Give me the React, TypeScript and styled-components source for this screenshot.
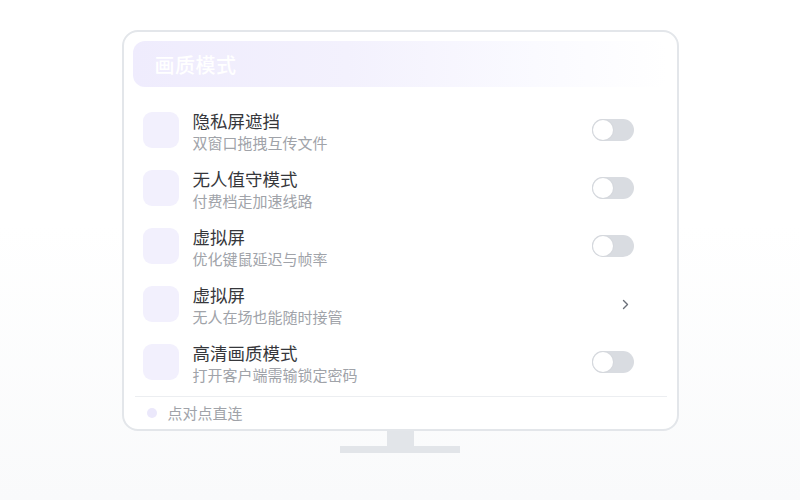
import React from "react";
import styled, { createGlobalStyle } from "styled-components";

const Global = createGlobalStyle`
  html, body { margin: 0; padding: 0; }
  body {
    width: 800px;
    height: 500px;
    overflow: hidden;
    font-family: "Noto Sans CJK SC", "Noto Sans", sans-serif;
    background: linear-gradient(180deg, #ffffff 0%, #ffffff 45%, #f9fafb 100%);
  }
`;

const Page = styled.div`
  width: 800px;
  height: 500px;
  display: flex;
  flex-direction: column;
  align-items: center;
  padding-top: 30px;
  box-sizing: border-box;
`;

const Monitor = styled.div`
  width: 557px;
  height: 401px;
  box-sizing: border-box;
  border: 2px solid #e3e6ea;
  border-radius: 16px;
  background: rgba(255, 255, 255, 0.9);
  padding: 9px 9px 0 9px;
  display: flex;
  flex-direction: column;
`;

const Neck = styled.div`
  width: 27px;
  height: 15px;
  background: #e2e5e9;
`;

const Base = styled.div`
  width: 120px;
  height: 7px;
  background: #e2e5e9;
`;

const Header = styled.div`
  height: 46px;
  border-radius: 12px;
  background: linear-gradient(90deg, #efecfd 0%, #f3f1fd 40%, #fafaff 75%, rgba(255,255,255,0) 100%);
  display: flex;
  align-items: center;
  padding-left: 22px;
`;

const HeaderTitle = styled.span`
  color: #ffffff;
  font-size: 20px;
  font-weight: 500;
  letter-spacing: 0.5px;
`;

const List = styled.div`
  margin-top: 14px;
  display: flex;
  flex-direction: column;
`;

const Row = styled.div`
  height: 58px;
  display: flex;
  align-items: center;
  padding: 0 34px 0 10px;
`;

const IconBox = styled.div`
  width: 36px;
  height: 36px;
  border-radius: 9px;
  background: #f2f0fd;
  flex-shrink: 0;
`;

const TextBlock = styled.div`
  flex: 1;
  margin-left: 14px;
  margin-top: 1px;
  display: flex;
  flex-direction: column;
`;

const Title = styled.div`
  font-size: 17.5px;
  line-height: 23px;
  color: #36373b;
`;

const Sub = styled.div`
  font-size: 15px;
  line-height: 21px;
  color: #a0a3a9;
`;

const Track = styled.div`
  width: 42px;
  height: 22px;
  border-radius: 11px;
  background: #d9dce1;
  position: relative;
`;

const Knob = styled.div`
  position: absolute;
  left: 1px;
  top: 1px;
  width: 20px;
  height: 20px;
  border-radius: 50%;
  background: #ffffff;
  box-shadow: 0 0 0 1px #d5d8dd;
`;

const Chevron = styled.div`
  width: 42px;
  display: flex;
  justify-content: flex-end;
  padding-right: 5px;
  box-sizing: border-box;
`;

const Footer = styled.div`
  margin-top: 5px;
  border-top: 1px solid #eceef1;
  margin-left: 2px;
  margin-right: 1px;
  height: 32px;
  display: flex;
  align-items: center;
  padding-left: 12px;
  gap: 11px;
`;

const Dot = styled.div`
  width: 10px;
  height: 10px;
  border-radius: 50%;
  background: #ebe8fb;
`;

const FooterText = styled.span`
  font-size: 15px;
  line-height: 20px;
  margin-top: -1px;
  color: #a0a3a9;
`;

type Item = { title: string; sub: string; kind: "toggle" | "chevron" };

const items: Item[] = [
  { title: "隐私屏遮挡", sub: "双窗口拖拽互传文件", kind: "toggle" },
  { title: "无人值守模式", sub: "付费档走加速线路", kind: "toggle" },
  { title: "虚拟屏", sub: "优化键鼠延迟与帧率", kind: "toggle" },
  { title: "虚拟屏", sub: "无人在场也能随时接管", kind: "chevron" },
  { title: "高清画质模式", sub: "打开客户端需输锁定密码", kind: "toggle" },
];

export default function App() {
  return (
    <>
      <Global />
      <Page>
        <Monitor>
          <Header>
            <HeaderTitle>画质模式</HeaderTitle>
          </Header>
          <List>
            {items.map((it, i) => (
              <Row key={i}>
                <IconBox />
                <TextBlock>
                  <Title>{it.title}</Title>
                  <Sub>{it.sub}</Sub>
                </TextBlock>
                {it.kind === "toggle" ? (
                  <Track>
                    <Knob />
                  </Track>
                ) : (
                  <Chevron>
                    <svg width="7" height="11" viewBox="0 0 7 11" fill="none">
                      <path d="M1.5 1.5 L5.5 5.5 L1.5 9.5" stroke="#6b7079" strokeWidth="1.4" strokeLinecap="round" strokeLinejoin="round" />
                    </svg>
                  </Chevron>
                )}
              </Row>
            ))}
          </List>
          <Footer>
            <Dot />
            <FooterText>点对点直连</FooterText>
          </Footer>
        </Monitor>
        <Neck />
        <Base />
      </Page>
    </>
  );
}
